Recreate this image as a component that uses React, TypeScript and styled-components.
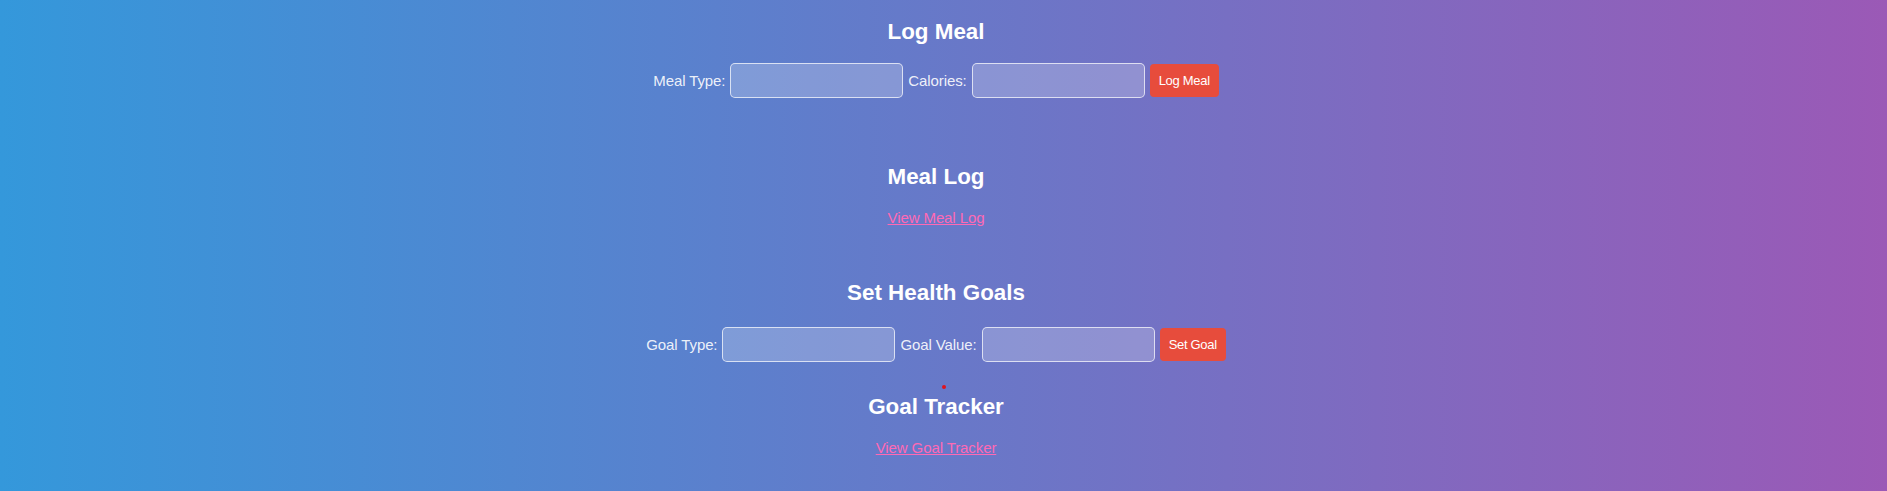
import React from "react";
import styled, { createGlobalStyle } from "styled-components";

const GlobalStyle = createGlobalStyle`
  html, body {
    margin: 0;
    padding: 0;
  }
  body {
    min-height: 100vh;
    background: linear-gradient(to right, #3498db, #9b59b6);
    font-family: "Liberation Sans", Arial, Helvetica, sans-serif;
    color: #ffffff;
  }
`;

const Page = styled.main`
  display: flex;
  flex-direction: column;
  align-items: center;
  padding: 18.5px 15px 0 0;
  min-height: 100vh;
  box-sizing: border-box;
`;

const Section = styled.section<{ $top?: number; $gap?: number }>`
  display: flex;
  flex-direction: column;
  align-items: center;
  margin-top: ${(p) => p.$top ?? 0}px;
  gap: ${(p) => p.$gap ?? 18.5}px;
`;

const Title = styled.h2`
  margin: 0;
  font-size: 22.4px;
  line-height: 26px;
  font-weight: 700;
  color: #ffffff;
`;

const FormRow = styled.div`
  display: flex;
  align-items: center;
  height: 35px;
`;

const Label = styled.label`
  font-size: 15px;
  line-height: 17px;
  letter-spacing: -0.1px;
  color: rgba(255, 255, 255, 0.9);
  margin-right: 5px;
`;

const Input = styled.input`
  box-sizing: border-box;
  width: 173px;
  height: 35px;
  margin-right: 5px;
  padding: 0 8px;
  border: 1px solid rgba(255, 255, 255, 0.7);
  border-radius: 5px;
  background: rgba(255, 255, 255, 0.22);
  color: #ffffff;
  font-family: inherit;
  font-size: 15px;
  outline: none;
`;

const Button = styled.button`
  box-sizing: border-box;
  height: 33px;
  padding: 0 9px;
  border: none;
  border-radius: 4px;
  background: #e74c3c;
  color: #ffffff;
  font-family: "Liberation Sans", Arial, sans-serif;
  font-size: 13px;
  letter-spacing: -0.3px;
  cursor: pointer;
`;

const Link = styled.a`
  font-size: 15px;
  line-height: 17px;
  letter-spacing: -0.1px;
  color: #ff69b4;
  text-decoration: underline;
`;

const DotRow = styled.div`
  height: 32px;
  display: flex;
  align-items: center;
  justify-content: center;
  margin-top: 9px;
`;

const Dot = styled.span`
  display: block;
  width: 4px;
  height: 4px;
  border-radius: 50%;
  background: #e0141e;
  transform: translate(8px, 0);
`;

export default function App() {
  return (
    <>
      <GlobalStyle />
      <Page>
        <Section>
          <Title>Log Meal</Title>
          <FormRow>
            <Label htmlFor="mealType">Meal Type:</Label>
            <Input id="mealType" type="text" />
            <Label htmlFor="calories">Calories:</Label>
            <Input id="calories" type="number" />
            <Button type="button">Log Meal</Button>
          </FormRow>
        </Section>

        <Section $top={66.2} $gap={18.8}>
          <Title>Meal Log</Title>
          <Link href="#meal-log">View Meal Log</Link>
        </Section>

        <Section $top={54.2} $gap={21}>
          <Title>Set Health Goals</Title>
          <FormRow>
            <Label htmlFor="goalType">Goal Type:</Label>
            <Input id="goalType" type="text" />
            <Label htmlFor="goalValue">Goal Value:</Label>
            <Input id="goalValue" type="number" />
            <Button type="button">Set Goal</Button>
          </FormRow>
        </Section>

        <DotRow>
          <Dot />
        </DotRow>

        <Section $gap={18.8} $top={-9}>
          <Title>Goal Tracker</Title>
          <Link href="#goal-tracker">View Goal Tracker</Link>
        </Section>
      </Page>
    </>
  );
}
